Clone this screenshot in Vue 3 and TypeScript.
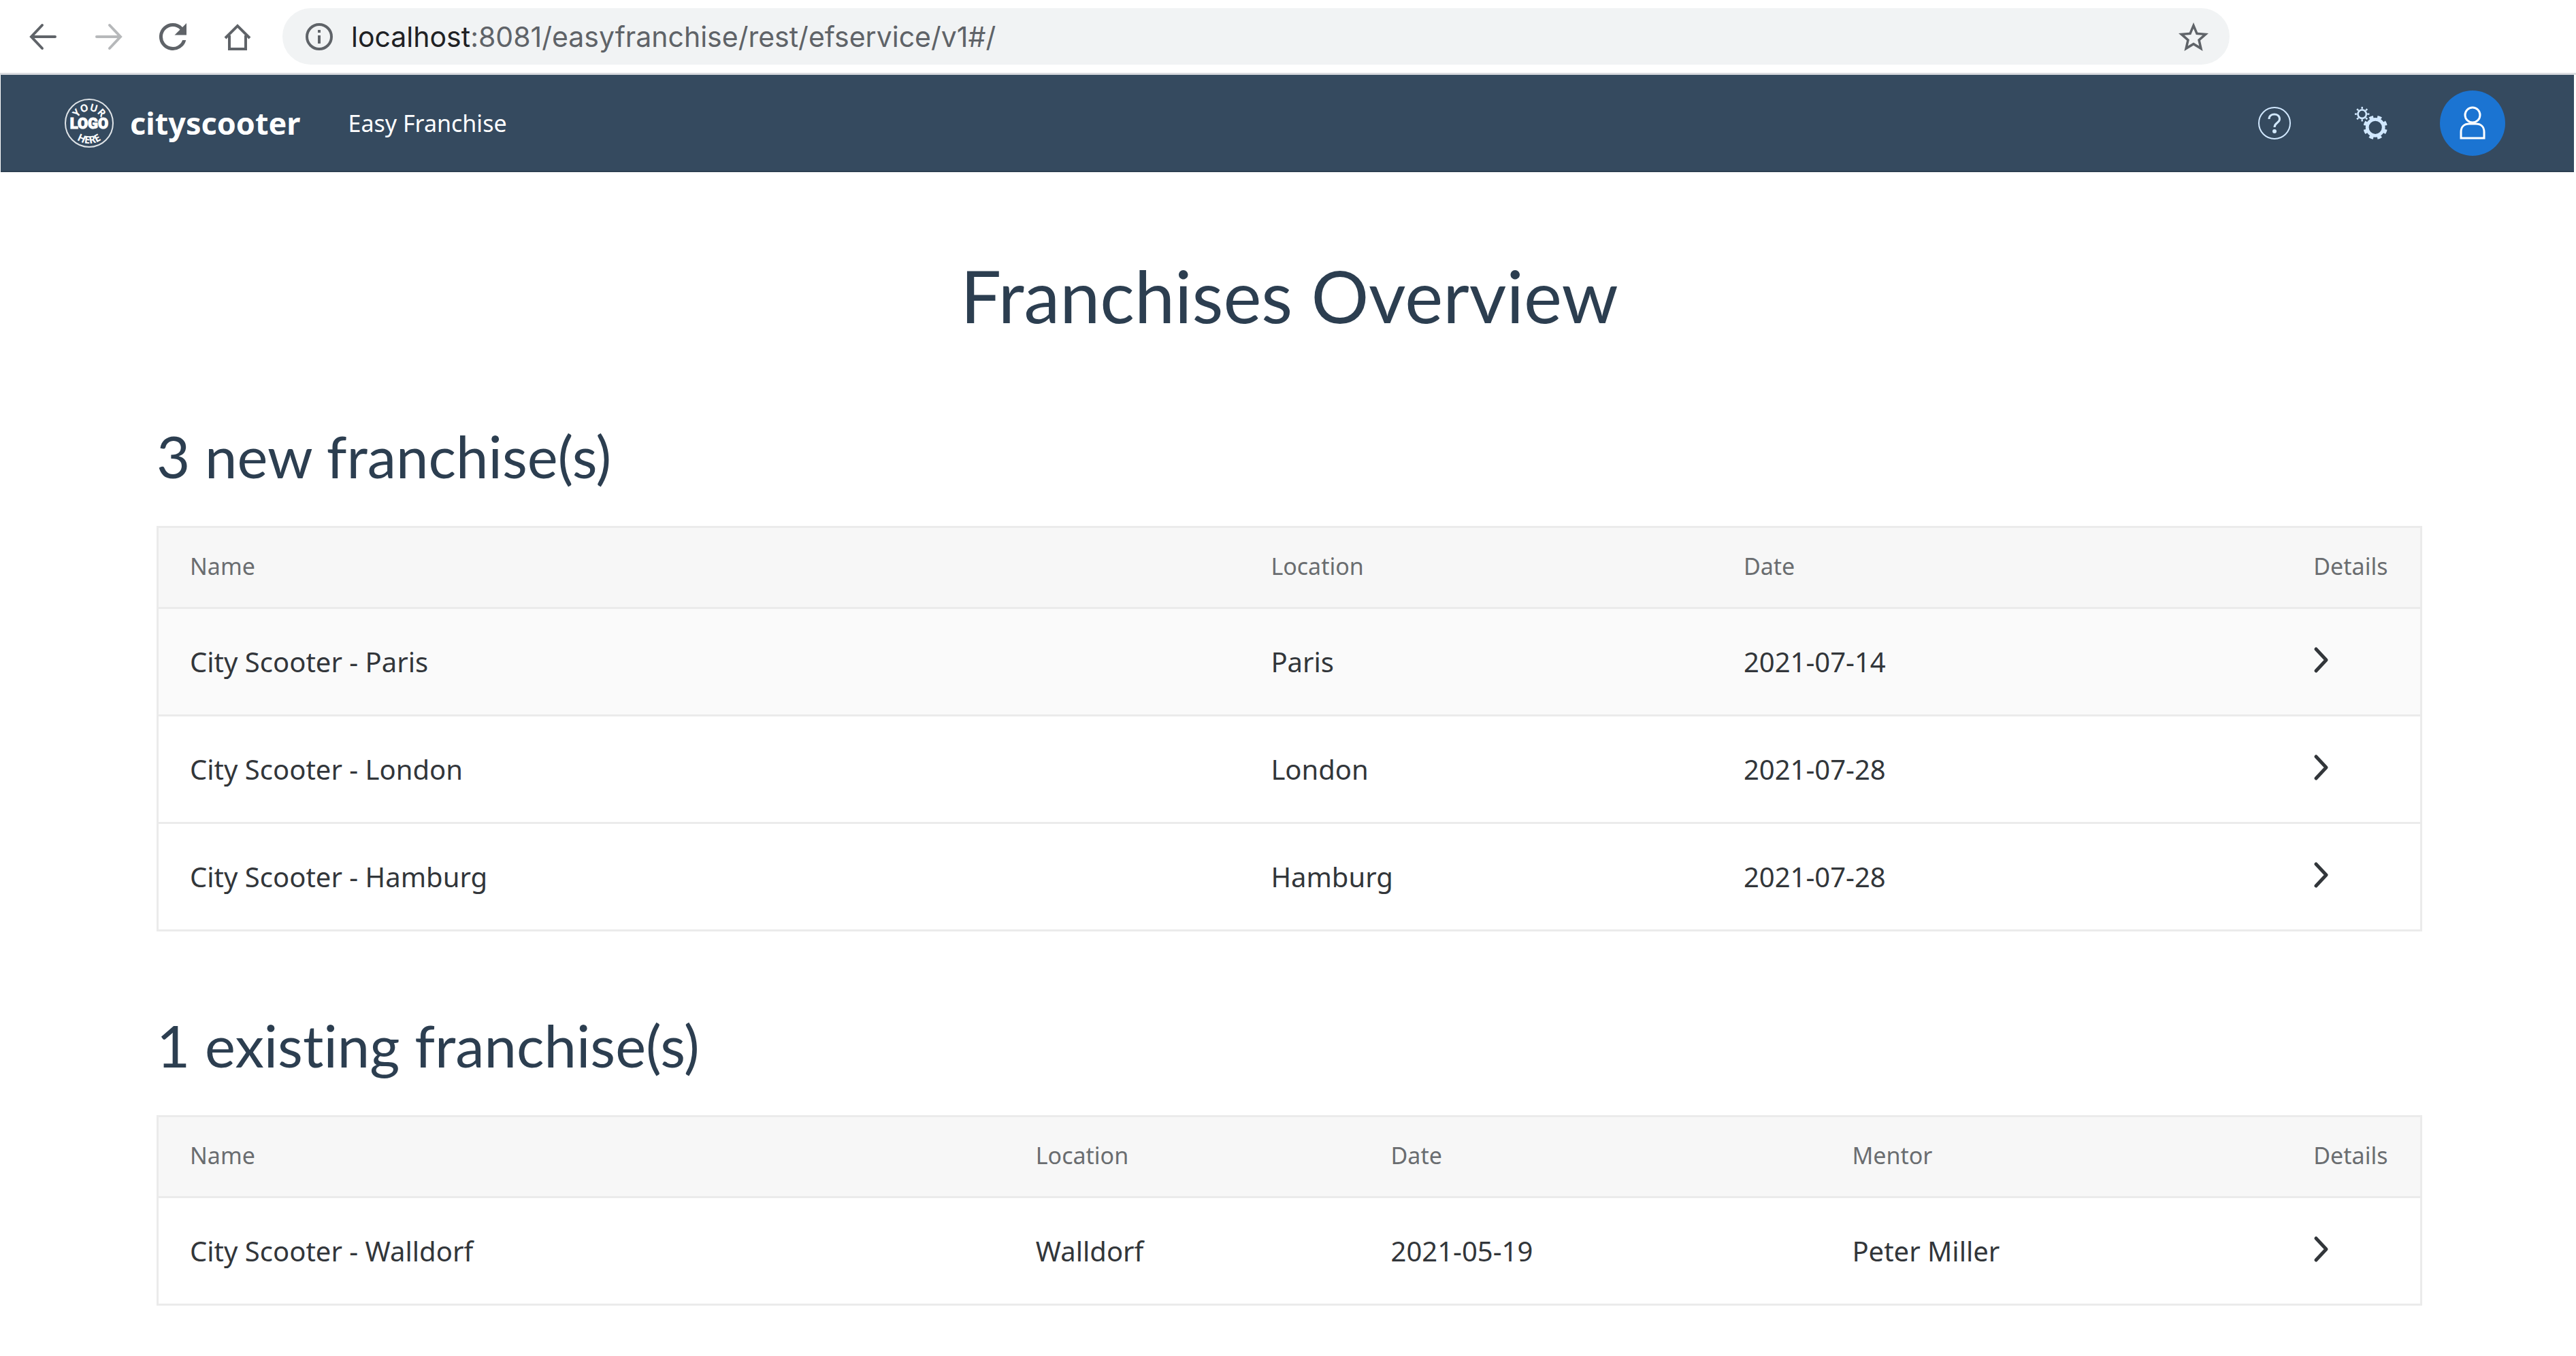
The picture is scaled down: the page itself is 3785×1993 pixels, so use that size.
<script setup lang="ts">
interface Franchise {
  name: string
  location: string
  date: string
  mentor?: string
}

interface Column {
  key: keyof Franchise
  label: string
}

interface Section {
  id: string
  title: string
  columns: Column[]
  rows: Franchise[]
}

const sections: Section[] = [
  {
    id: 'new',
    title: '3 new franchise(s)',
    columns: [
      { key: 'name', label: 'Name' },
      { key: 'location', label: 'Location' },
      { key: 'date', label: 'Date' },
    ],
    rows: [
      { name: 'City Scooter - Paris', location: 'Paris', date: '2021-07-14' },
      { name: 'City Scooter - London', location: 'London', date: '2021-07-28' },
      { name: 'City Scooter - Hamburg', location: 'Hamburg', date: '2021-07-28' },
    ],
  },
  {
    id: 'existing',
    title: '1 existing franchise(s)',
    columns: [
      { key: 'name', label: 'Name' },
      { key: 'location', label: 'Location' },
      { key: 'date', label: 'Date' },
      { key: 'mentor', label: 'Mentor' },
    ],
    rows: [
      { name: 'City Scooter - Walldorf', location: 'Walldorf', date: '2021-05-19', mentor: 'Peter Miller' },
    ],
  },
]
</script>

<template>
  <div class="window">
    <div class="toolbar">
      <div class="nav-buttons">
        <button type="button" aria-label="Back">
          <svg viewBox="0 0 48 48" class="line"><path d="M41 24H6M22 7L6 24L22 41" /></svg>
        </button>
        <button type="button" aria-label="Forward" disabled>
          <svg viewBox="0 0 48 48" class="line"><path d="M7 24H42M26 7L42 24L26 41" /></svg>
        </button>
        <button type="button" aria-label="Reload">
          <svg viewBox="2.4 2.4 19.2 19.2" class="solid">
            <path d="M17.65 6.35A7.95 7.95 0 0 0 12 4a8 8 0 1 0 7.73 10h-2.08A6 6 0 1 1 12 6c1.66 0 3.14.69 4.22 1.78L13 11h7V4z" />
          </svg>
        </button>
        <button type="button" aria-label="Home">
          <svg viewBox="0 0 48 48" class="line sharp"><path d="M6 26L24 8L42 26M12 22V42H36V22" /></svg>
        </button>
      </div>
      <div class="address">
        <button type="button" class="info" aria-label="Site information">
          <svg viewBox="0 0 40 40">
            <circle cx="20" cy="20" r="18" fill="none" stroke="#5f6368" stroke-width="4" />
            <path d="M18 18h4v12h-4zM18 10h4v4h-4z" fill="#5f6368" />
          </svg>
        </button>
        <div class="url" role="textbox" contenteditable="true" spellcheck="false" aria-label="Address"><span class="host">localhost</span>:8081/easyfranchise/rest/efservice/v1#/</div>
        <button type="button" class="star" aria-label="Bookmark this page">
          <svg viewBox="2 2 20 19">
            <path
              fill="#5f6368"
              d="M22 9.24l-7.19-.62L12 2 9.19 8.63 2 9.24l5.46 4.73L5.82 21 12 17.27 18.18 21l-1.63-7.03L22 9.24zM12 15.4l-3.76 2.27 1-4.28-3.32-2.88 4.38-.38L12 6.1l1.71 4.04 4.38.38-3.32 2.88 1 4.28L12 15.4z"
            />
          </svg>
        </button>
      </div>
    </div>

    <header class="shell">
      <svg class="logo" viewBox="0 0 72 72" role="img" aria-label="Logo">
        <defs>
          <path id="arc-top" d="M16 38A20 20 0 0 1 56 38" />
          <path id="arc-bottom" d="M5 35A31 31 0 0 0 67 35" />
        </defs>
        <circle cx="36" cy="36" r="35" fill="none" stroke="#dfe4e8" stroke-width="2" />
        <text class="logo-arc"><textPath href="#arc-top" startOffset="50%">YOUR</textPath></text>
        <text class="logo-mid" x="36" y="44">LOGO</text>
        <text class="logo-arc"><textPath href="#arc-bottom" startOffset="50%">HERE</textPath></text>
      </svg>
      <span class="brand">cityscooter</span>
      <span class="product">Easy Franchise</span>
      <div class="actions">
        <button type="button" aria-label="Help">
          <svg viewBox="0 0 48 48" fill="none" stroke="#d1e8ff">
            <circle cx="24" cy="24" r="23" stroke-width="2" />
            <path d="M16 18C16 8.500 31.500 8.500 31.500 18C31.500 24 24 23 24 30" stroke-width="3" />
            <circle cx="24" cy="36" r="3" fill="#d1e8ff" stroke="none" />
          </svg>
        </button>
        <button type="button" aria-label="Settings">
          <svg viewBox="0 0 48 48" fill="none" stroke="#d1e8ff">
            <circle cx="10.700" cy="10.700" r="6.200" stroke-width="2.600" />
            <circle cx="10.700" cy="10.700" r="9" stroke-width="3.400" pathLength="24" stroke-dasharray="1 2" stroke-dashoffset="0.500" />
            <circle cx="30.200" cy="30.300" r="12" stroke-width="4.800" />
            <circle cx="30.200" cy="30.300" r="15.500" stroke-width="4.400" pathLength="16" stroke-dasharray="1 1" stroke-dashoffset="-0.500" />
          </svg>
        </button>
      </div>
      <button type="button" class="avatar" aria-label="User account">
        <svg viewBox="0 0 96 96" fill="none" stroke="#fff" stroke-width="3">
          <circle cx="48" cy="36" r="11" />
          <path d="M31 70V61C31 53 36 49 43 49H53C60 49 65 53 65 61V70Z" />
        </svg>
      </button>
    </header>

    <main>
      <h1>Franchises Overview</h1>
      <section v-for="section in sections" :key="section.id">
        <h2 :id="section.id">{{ section.title }}</h2>
        <table :class="section.id" :aria-labelledby="section.id">
          <thead>
            <tr>
              <th v-for="col in section.columns" :key="col.key" scope="col" :class="col.key">{{ col.label }}</th>
              <th scope="col" class="details">Details</th>
            </tr>
          </thead>
          <tbody>
            <tr v-for="row in section.rows" :key="row.name">
              <td v-for="col in section.columns" :key="col.key">{{ row[col.key] }}</td>
              <td>
                <button type="button" class="open" :aria-label="`Details of ${row.name}`">
                  <svg viewBox="0 0 24 40"><path d="M4 4L19 20L4 36" /></svg>
                </button>
              </td>
            </tr>
          </tbody>
        </table>
      </section>
    </main>
  </div>
</template>

<style>
body {
  margin: 0;
  background: #fff;
}
</style>

<style scoped>
.window {
  font-family: 'Noto Sans', 'Open Sans', sans-serif;
  color: #32363a;
}

button {
  display: block;
  flex: none;
  padding: 0;
  border: 0;
  background: none;
  cursor: pointer;
}

svg {
  display: block;
  width: 100%;
  height: 100%;
}

.toolbar {
  display: flex;
  align-items: center;
  padding: 12px 509px 12px 40px;
  border-bottom: 3px solid #dadce0;
}

.nav-buttons {
  display: flex;
  flex: none;
  gap: 47px;
  margin-right: 42px;
}

.nav-buttons button {
  width: 48px;
  height: 48px;
}

.nav-buttons button:disabled {
  opacity: 0.45;
}

.line {
  fill: none;
  stroke: #5f6368;
  stroke-width: 4;
  stroke-linecap: round;
}

.sharp {
  stroke-linecap: butt;
}

.solid {
  fill: #5f6368;
}

.address {
  display: flex;
  flex: 1;
  align-items: center;
  height: 83px;
  padding: 0 31px 0 34px;
  border-radius: 42px;
  background: #f1f3f4;
}

.info {
  width: 40px;
  height: 40px;
}

.url {
  flex: 1;
  margin-left: 27px;
  font: 41px/56px Inter, Roboto, sans-serif;
  color: #5f6368;
  white-space: nowrap;
  outline: none;
}

.host {
  color: #202124;
}

.star {
  width: 44px;
  height: 42px;
}

.shell {
  display: flex;
  align-items: center;
  height: 141px;
  margin: 0 3px 0 1px;
  padding: 0 101px 0 94px;
  border-bottom: 2px solid #2c3f52;
  background: #354a5f;
  color: #fff;
}

.logo {
  flex: none;
  width: 72px;
  height: 72px;
  fill: #fff;
  text-anchor: middle;
}

.logo-arc {
  font: 700 15px 'Noto Sans', sans-serif;
}

.logo-mid {
  font: 900 22px Roboto, sans-serif;
  stroke: #fff;
  stroke-width: 1px;
}

.brand {
  margin-left: 24px;
  font-size: 45px;
  line-height: 60px;
  font-weight: 700;
}

.product {
  margin-left: 70px;
  font-size: 34px;
  line-height: 48px;
}

.actions {
  display: flex;
  gap: 94px;
  margin-left: auto;
  margin-right: 77px;
}

.actions button {
  width: 48px;
  height: 48px;
}

.avatar {
  width: 96px;
  height: 96px;
  border-radius: 50%;
  background: #1b74d2;
}

main {
  padding: 121px 226px 72px 230px;
}

h1,
h2 {
  margin: 0;
  font-family: Lato, 'Open Sans', sans-serif;
  font-weight: 400;
  font-variant-ligatures: none;
  color: #2c3e50;
}

h1 {
  margin-bottom: 126px;
  font-size: 106px;
  line-height: 120px;
  text-align: center;
}

h2 {
  margin-bottom: 53px;
  font-size: 85px;
  line-height: 100px;
}

section + section {
  margin-top: 117px;
}

table {
  box-sizing: border-box;
  width: 100%;
  table-layout: fixed;
  border: 3px solid #ebebeb;
  border-spacing: 0;
}

th,
td {
  box-sizing: border-box;
  padding: 0 0 0 46px;
  border-bottom: 3px solid #ebebeb;
  text-align: left;
  vertical-align: middle;
}

th {
  height: 119px;
  padding-bottom: 4px;
  background: #f7f7f7;
  font-size: 34px;
  line-height: 48px;
  font-weight: 400;
  color: #6a6d70;
}

td {
  height: 158px;
  font-size: 40px;
  line-height: 56px;
}

tbody tr:last-child td {
  height: 155px;
  border-bottom: 0;
}

.new tbody tr:first-child {
  background: #fafafa;
}

.details {
  width: 6.1%;
}

.new .name {
  width: 47.8%;
}

.new .location {
  width: 20.9%;
}

.new .date {
  width: 25.2%;
}

.existing .name {
  width: 37.4%;
}

.existing .location {
  width: 15.7%;
}

.existing .date {
  width: 20.4%;
}

.existing .mentor {
  width: 20.4%;
}

.open {
  width: 24px;
  height: 40px;
  margin-bottom: 6px;
}

.open path {
  fill: none;
  stroke: #32363a;
  stroke-width: 5;
  stroke-linecap: round;
  stroke-linejoin: round;
}
</style>
